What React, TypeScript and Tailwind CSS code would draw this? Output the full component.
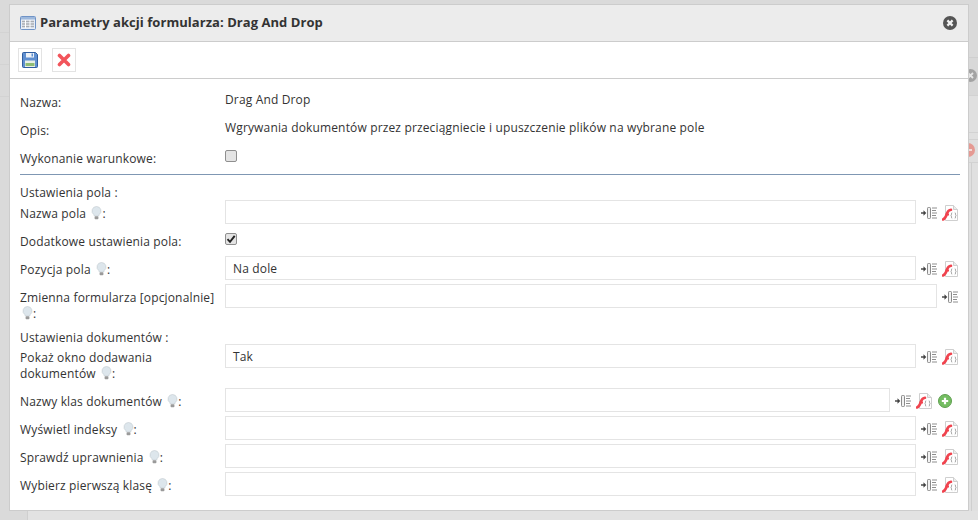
import type { ReactNode } from "react";

// Form action parameters dialog, sitting over a dimmed page.

function TableIcon() {
  return (
    <svg width="16" height="14" viewBox="0 0 16 14" className="shrink-0">
      <rect x="0.5" y="0.5" width="15" height="13" rx="1" fill="#e8eef7" stroke="#6f93c6" />
      <rect x="1" y="1" width="14" height="2.5" fill="#9db8dc" />
      <path d="M2 5.500h12M2 8h12M2 10.500h12" stroke="#a9adb3" strokeWidth="1.400" />
      <path d="M5.500 4v8M10 4v8" stroke="#ffffff" strokeWidth="1" />
    </svg>
  );
}

function SaveIcon() {
  return (
    <svg width="16" height="16" viewBox="0 0 16 16">
      <path d="M1.500.5h12l2 2v12a1 1 0 0 1-1 1h-13a1 1 0 0 1-1-1v-13a1 1 0 0 1 1-1z" fill="#5f8fd0" stroke="#2f5d9f" />
      <rect x="4" y="1" width="8" height="4.500" fill="#eef2f7" />
      <rect x="9.500" y="1.500" width="1.500" height="3" fill="#5f8fd0" />
      <rect x="3" y="8.500" width="10" height="6.500" fill="#e8efe6" />
      <rect x="3.500" y="11" width="9" height="3" fill="#8dbb74" />
    </svg>
  );
}

function CrossIcon() {
  return (
    <svg width="14" height="14" viewBox="0 0 14 14">
      <path d="M2.500 2.500l9 9M11.500 2.500l-9 9" stroke="#f2545b" strokeWidth="3.600" strokeLinecap="round" />
    </svg>
  );
}

function CloseCircle() {
  return (
    <svg width="14" height="14" viewBox="0 0 14 14">
      <circle cx="7" cy="7" r="7" fill="#555555" />
      <path d="M4.400 4.400l5.200 5.200M9.600 4.400l-5.200 5.200" stroke="#f2f2f2" strokeWidth="2.200" />
    </svg>
  );
}

function Bulb() {
  return (
    <svg width="11" height="14" viewBox="0 0 11 14" className="ml-[2px] inline-block align-[-2px]">
      <path d="M5.500 .5a4.500 4.500 0 0 1 2.700 8.100L7.700 10H3.300l-.5-1.400A4.500 4.500 0 0 1 5.500 .5z" fill="#dde6ec" stroke="#c3cbd0" strokeWidth="0.600" />
      <rect x="3.600" y="10.200" width="3.800" height="3" rx="0.800" fill="#9a9a9a" />
    </svg>
  );
}

function InsertIcon() {
  return (
    <svg width="16" height="12" viewBox="0 0 16 12" className="shrink-0">
      <path d="M0 6h3" stroke="#3f3f3f" strokeWidth="1.400" />
      <path d="M2.500 3.200L5.300 6 2.500 8.800z" fill="#3f3f3f" />
      <rect x="6.500" y="0.500" width="3" height="11" rx="0.800" fill="#f2f2f2" stroke="#8a8a8a" />
      <path d="M11 1h5M11 3.500h4M11 6h5M11 8.500h4M11 11h5" stroke="#8e8e8e" strokeWidth="1" />
    </svg>
  );
}

function ScriptIcon() {
  return (
    <svg width="16" height="16" viewBox="0 0 16 16" className="shrink-0">
      <path d="M3.500.5h8l4 4v11h-12z" fill="#ffffff" stroke="#cfcfcf" />
      <path d="M11.500.5v4h4" fill="#ececec" stroke="#cfcfcf" />
      <path d="M1 14.500c2.500-1 3.200-3.500 4.200-6.500.7-2 1.800-3 3.800-3.200" fill="none" stroke="#f0434e" strokeWidth="2.600" strokeLinecap="round" />
      <path d="M3.500 9.500h3.500" stroke="#f0434e" strokeWidth="2" />
      <path d="M10.200 7.500c-1 0-.4 2.500-1.200 3 .8.500.2 3 1.200 3M12.800 7.500c1 0 .4 2.500 1.200 3-.8.500-.2 3-1.200 3" fill="none" stroke="#8c8c8c" strokeWidth="0.800" />
    </svg>
  );
}

function AddIcon() {
  return (
    <svg width="14" height="14" viewBox="0 0 14 14" className="shrink-0">
      <circle cx="7" cy="7" r="6.500" fill="#74bd62" stroke="#5f9f50" />
      <path d="M7 3.800v6.400M3.800 7h6.400" stroke="#ffffff" strokeWidth="2.200" />
    </svg>
  );
}

function Checkbox({ checked }: { checked?: boolean }) {
  return (
    <span className="flex h-3 w-3 items-center justify-center rounded-[2px] border border-[#8f8f8f] bg-[#e4e4e4]">
      {checked ? (
        <svg width="10" height="10" viewBox="0 0 10 10">
          <path d="M1.500 5.200l2.500 2.600 4.700-6" fill="none" stroke="#222222" strokeWidth="1.900" />
        </svg>
      ) : null}
    </span>
  );
}

function Hint() {
  return (
    <>
      {" "}
      <Bulb />:
    </>
  );
}

interface FieldRowProps {
  label: ReactNode;
  value?: string;
  inputClass?: string;
  script?: boolean;
  add?: boolean;
  rowClass?: string;
}

function FieldRow({
  label,
  value = "",
  inputClass = "w-[691px]",
  script = true,
  add = false,
  rowClass = "",
}: FieldRowProps) {
  return (
    <div className={`flex items-start ${rowClass}`}>
      <div className="w-[205px] shrink-0 pt-[6px] pr-2 leading-[16px]">{label}</div>
      <div className={`h-6 shrink-0 border border-[#e4e4e4] bg-white pl-[7px] leading-[24px] ${inputClass}`}>
        {value}
      </div>
      <div className="ml-[5px] flex h-6 items-center gap-[5px] pt-[2px]">
        <InsertIcon />
        {script ? <ScriptIcon /> : null}
        {add ? (
          <span className="ml-px">
            <AddIcon />
          </span>
        ) : null}
      </div>
    </div>
  );
}

function BackdropBits() {
  return (
    <>
      <div className="absolute top-0 left-0 flex h-full w-[10px] flex-col">
        <div className="h-[33px] border-b border-[#d3d3d3]" />
        <div className="h-[32px] border-b border-[#d3d3d3]" />
        <div className="h-[32px] border-b border-[#d3d3d3]" />
      </div>
      <div className="absolute top-0 right-0 flex h-full w-[10px] flex-col">
        <div className="h-[57px]" />
        <div className="h-[38px] border-t border-[#cfcfcf] bg-[#d8d8d8]" />
        <div className="h-[37px] border-t border-[#d2d2d2] bg-[#e0e0e0]" />
        <div className="h-[7px] border-t border-[#d2d2d2] bg-[#e0e0e0]" />
        <div className="h-[23px] border-t border-[#d2d2d2] bg-[#dfdfdf]" />
        <div className="flex-1 border-t border-[#d2d2d2] bg-[#e0e0e0] pl-[2px]">
          <div className="h-full w-[2px] border-r border-[#cfcfcf]" />
        </div>
      </div>
      <div className="absolute top-[69px] left-[964px] flex h-[13px] w-[13px] items-center justify-center rounded-full bg-[#a3a3a3]">
        <svg width="9" height="9" viewBox="0 0 9 9">
          <path d="M2 2l5 5M7 2l-5 5" stroke="#e6e6e6" strokeWidth="1.800" />
        </svg>
      </div>
      <div className="absolute top-[143px] left-[961px] flex h-[14px] w-[14px] items-center justify-center rounded-full bg-[#e59a93]">
        <div className="h-[2px] w-[8px] bg-[#f3dcd9]" />
      </div>
      <div className="absolute top-[511px] left-[27px] h-[9px] w-[951px] border-l border-[#cfcfcf] bg-[#e2e2e2]" />
    </>
  );
}

export default function App() {
  return (
    <div
      className="relative h-[520px] w-[978px] overflow-hidden bg-[#dadada] pt-[4px] pl-[9px] text-[12px] tracking-[0.15px] text-[#333333]"
      style={{ fontFamily: '"Open Sans", sans-serif' }}
    >
      <BackdropBits />
      <div className="relative h-[507px] w-[960px] border border-[#cccccc] bg-white">
        <div className="flex h-[37px] items-center border-b border-[#cccccc] bg-[#ececec] pr-[11px] pl-[10px]">
          <TableIcon />
          <span className="ml-[4px] flex-1 text-[13px] font-bold tracking-[0.05px] text-[#333333]">
            Parametry akcji formularza: Drag And Drop
          </span>
          <CloseCircle />
        </div>
        <div className="flex h-[37px] items-center gap-[10px] border-b border-[#cccccc] pl-[8px]">
          <button type="button" className="flex h-6 w-6 items-center justify-center border border-[#e3e3e3]">
            <SaveIcon />
          </button>
          <button type="button" className="flex h-6 w-6 items-center justify-center border border-[#e3e3e3]">
            <CrossIcon />
          </button>
        </div>

        <div className="px-[10px]">
          <div className="flex pt-[15px] leading-[16px]">
            <div className="w-[205px] pt-[1px]">Nazwa:</div>
            <div className="-mt-[2px]">Drag And Drop</div>
          </div>
          <div className="mt-[12px] flex leading-[16px]">
            <div className="w-[205px]">Opis:</div>
            <div className="-mt-[3px]">Wgrywania dokumentów przez przeciągniecie i upuszczenie plików na wybrane pole</div>
          </div>
          <div className="mt-[12px] flex leading-[16px]">
            <div className="w-[205px]">Wykonanie warunkowe:</div>
            <div className="-mt-[1px]">
              <Checkbox />
            </div>
          </div>
          <div className="mt-[7px] h-px w-[940px] bg-[#7f97b3]" />

          <div className="mt-[10px] leading-[16px]">Ustawienia pola :</div>
          <FieldRow rowClass="-mt-px" label={<>Nazwa pola<Hint /></>} />
          <div className="mt-[10px] flex leading-[16px]">
            <div className="w-[205px]">Dodatkowe ustawienia pola:</div>
            <div className="-mt-[1px]">
              <Checkbox checked />
            </div>
          </div>
          <FieldRow rowClass="mt-[6px]" label={<>Pozycja pola<Hint /></>} value="Na dole" />
          <FieldRow
            rowClass="mt-[4px]"
            label={<>Zmienna formularza [opcjonalnie]<Hint /></>}
            inputClass="w-[712px]"
            script={false}
          />
          <div className="mt-[8px] leading-[16px]">Ustawienia dokumentów :</div>
          <FieldRow rowClass="-mt-[2px]" label={<>Pokaż okno dodawania dokumentów<Hint /></>} value="Tak" />
          <FieldRow rowClass="mt-[6px]" label={<>Nazwy klas dokumentów<Hint /></>} inputClass="w-[665px]" add />
          <FieldRow rowClass="mt-[4px]" label={<>Wyświetl indeksy<Hint /></>} />
          <FieldRow rowClass="mt-[4px]" label={<>Sprawdź uprawnienia<Hint /></>} />
          <FieldRow rowClass="mt-[4px]" label={<>Wybierz pierwszą klasę<Hint /></>} />
        </div>
      </div>
    </div>
  );
}
